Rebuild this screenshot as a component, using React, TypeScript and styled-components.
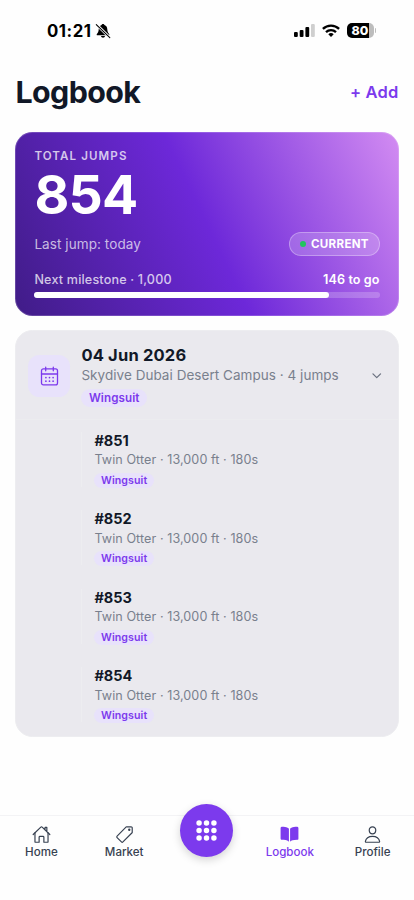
import React from 'react';
import styled, { createGlobalStyle } from 'styled-components';
import {
  IoApps,
  IoBook,
  IoChevronDown,
  IoHomeOutline,
  IoPersonOutline,
  IoPricetagOutline,
} from 'react-icons/io5';

const GlobalStyle = createGlobalStyle`
  * { box-sizing: border-box; }
  body { margin: 0; background: #fff; }
  svg { display: block; flex: none; }
`;

const Screen = styled.div`
  width: 414px;
  height: 900px;
  display: flex;
  flex-direction: column;
  background: #fefefe;
  color: #111827;
  font-family: Inter, sans-serif;
  overflow: hidden;
`;

const StatusBar = styled.div`
  height: 61px;
  padding: 0 38px 0 47px;
  display: flex;
  align-items: center;
  justify-content: space-between;
  color: #000;
`;

const Clock = styled.div`
  display: flex;
  align-items: center;
  gap: 3.5px;
  font-size: 16.8px;
  font-weight: 700;
  line-height: 20px;
  letter-spacing: 0.5px;
`;

const StatusIcons = styled.div`
  display: flex;
  align-items: center;
  gap: 7px;
`;

const Battery = styled.div`
  display: flex;
  align-items: center;
  gap: 1px;
`;

const BatteryBody = styled.div`
  width: 27px;
  height: 14.5px;
  border-radius: 5px;
  background: linear-gradient(90deg, #000 81%, #bdbdbd 81%);
  color: #fff;
  font-size: 12.4px;
  line-height: 15px;
  font-weight: 800;
  text-align: center;
  letter-spacing: 0.1px;
`;

const BatteryTip = styled.div`
  width: 1.5px;
  height: 5px;
  border-radius: 0 2px 2px 0;
  background: #bdbdbd;
`;

const Header = styled.header`
  height: 71px;
  padding: 0 15.5px 9.5px;
  display: flex;
  align-items: center;
  justify-content: space-between;
`;

const Title = styled.h1`
  margin: 0;
  font-size: 30.4px;
  line-height: 38px;
  font-weight: 700;
  letter-spacing: -0.6px;
`;

const AddButton = styled.button`
  padding: 0;
  border: 0;
  background: none;
  color: #7c3aed;
  font: 600 16.5px/20px Inter, sans-serif;
  letter-spacing: 0.2px;
`;

const SummaryCard = styled.section`
  margin: 0 15.4px;
  height: 183.5px;
  padding: 17px 18px 0 18px;
  border: 1px solid rgba(255, 255, 255, 0.18);
  border-radius: 17.5px;
  background: linear-gradient(64.4deg, #401c87 0%, #6d28d9 50%, #d38cf2 100%) border-box;
  color: #fff;
`;

const Eyebrow = styled.div`
  font-size: 11.55px;
  line-height: 12px;
  font-weight: 600;
  letter-spacing: 1.1px;
  color: rgba(255, 255, 255, 0.75);
`;

const Total = styled.div`
  font-size: 53.6px;
  line-height: 65px;
  font-weight: 700;
  letter-spacing: -0.75px;
`;

const SummaryRow = styled.div`
  margin-top: 4.5px;
  height: 24px;
  display: flex;
  align-items: center;
  justify-content: space-between;
`;

const LastJump = styled.div`
  font-size: 13.5px;
  line-height: 18px;
  letter-spacing: 0.08px;
  color: rgba(255, 255, 255, 0.7);
`;

const StatusPill = styled.div`
  height: 24px;
  padding: 0 9.8px;
  display: flex;
  align-items: center;
  gap: 5px;
  border: 1px solid rgba(255, 255, 255, 0.3);
  border-radius: 12px;
  background: rgba(255, 255, 255, 0.18);
  font-size: 11.55px;
  font-weight: 700;
  letter-spacing: 0.3px;
`;

const Dot = styled.i`
  width: 6px;
  height: 6px;
  border-radius: 50%;
  background: #22c55e;
`;

const MilestoneRow = styled.div`
  margin-top: 16px;
  display: flex;
  justify-content: space-between;
  font-size: 12.6px;
  line-height: 16px;
  font-weight: 500;
  letter-spacing: 0.17px;
  color: rgba(255, 255, 255, 0.75);

  strong {
    font-weight: 600;
    letter-spacing: 0.1px;
    color: #fff;
  }
`;

const Track = styled.div`
  margin-top: 4.5px;
  height: 6px;
  border-radius: 3px;
  background: rgba(255, 255, 255, 0.2);
`;

const Fill = styled.div`
  height: 100%;
  border-radius: 3px;
  background: #fff;
`;

const DayCard = styled.section`
  margin: 14.8px 15.4px 0;
  height: 407px;
  border: 1px solid #ededf0;
  border-radius: 17.5px;
  background: #eae9ee;
`;

const DayHeader = styled.div`
  height: 88.5px;
  padding: 11.5px 14.5px 10px 12px;
  display: flex;
  align-items: center;
  border-bottom: 1px solid #ececef;
`;

const IconTile = styled.div`
  width: 41.5px;
  height: 41.5px;
  margin-right: 11.5px;
  display: grid;
  place-items: center;
  border-radius: 11.5px;
  background: #e8e2fb;
  color: #7c3aed;
`;

const DayInfo = styled.div`
  flex: 1;
`;

const DayTitle = styled.div`
  font-size: 16.5px;
  line-height: 21px;
  font-weight: 700;
  letter-spacing: 0.18px;
`;

const DayPlace = styled.div`
  font-size: 13.5px;
  line-height: 17px;
  margin: 1px 0 5px;
  letter-spacing: 0.04px;
  color: #79808d;
`;

const Tag = styled.span<{ $small?: boolean }>`
  display: block;
  width: fit-content;
  padding: 0 ${(p) => (p.$small ? '6.6px' : '7.5px')};
  border-radius: 9px;
  background: #e8e2fb;
  color: #7c3aed;
  font-size: ${(p) => (p.$small ? '10.6px' : '11.6px')};
  line-height: ${(p) => (p.$small ? '15px' : '18px')};
  font-weight: 600;
  letter-spacing: 0.1px;
`;

const JumpList = styled.div`
  padding: 12.2px 14px 0 65px;
  display: flex;
  flex-direction: column;
  gap: 23.4px;
`;

const Jump = styled.div`
  height: 55px;
  padding-left: 12px;
  border-left: 1px solid #ededf0;
`;

const JumpNumber = styled.div`
  font-size: 14.5px;
  line-height: 18px;
  font-weight: 700;
`;

const JumpDetail = styled.div`
  margin: 2.5px 0 4.3px;
  font-size: 12.6px;
  line-height: 16px;
  letter-spacing: 0.07px;
  color: #79808d;
`;

const TabBar = styled.nav`
  margin-top: auto;
  height: 85px;
  padding-top: 9px;
  display: grid;
  grid-template-columns: repeat(5, 1fr);
  border-top: 1px solid #f3f3f5;
`;

const Tab = styled.div<{ $active?: boolean }>`
  display: flex;
  flex-direction: column;
  align-items: center;
  font-size: 11.55px;
  line-height: 16px;
  font-weight: 500;
  color: ${(p) => (p.$active ? '#7c3aed' : '#374151')};
`;

const AppsButton = styled.div`
  width: 53px;
  height: 53px;
  margin: -21px auto 0;
  display: grid;
  place-items: center;
  border-radius: 50%;
  background: #7c3aed;
  color: #fff;
  box-shadow: 0 3px 9px rgba(0, 0, 0, 0.17);
`;

const MutedBell = () => (
  <svg width="16" height="16" viewBox="0 0 16 16">
    <path
      d="M8 1c.8 0 1.3.5 1.5 1.1 1.8.6 2.7 2.2 2.8 4.2.1 2.5.7 3.5 1.8 4.6.5.6.2 1.3-.5 1.3H2.4c-.7 0-1-.7-.5-1.3 1.1-1.1 1.7-2.1 1.8-4.6.1-2 1-3.6 2.8-4.2C6.7 1.5 7.2 1 8 1Z"
      fill="#000"
    />
    <path d="M6 13.1h4c-.2 1-1 1.6-2 1.6s-1.8-.6-2-1.6Z" fill="#000" />
    <path d="M1.7 1.8 15 14.8" stroke="#fff" strokeWidth="2.6" />
    <path d="M1.3 1.6 14.8 14.6" stroke="#000" strokeWidth="1.1" strokeLinecap="round" />
  </svg>
);

const Signal = () => (
  <svg width="21" height="13" viewBox="0 0 21 13">
    <rect x="0" y="8" width="3.8" height="5" rx="1.1" />
    <rect x="5.7" y="6" width="3.8" height="7" rx="1.1" />
    <rect x="11.4" y="3" width="3.8" height="10" rx="1.1" />
    <rect x="17" y="0" width="3.8" height="13" rx="1.1" fill="#cfcfcf" />
  </svg>
);

const Wifi = () => (
  <svg width="18" height="13" viewBox="0 0 18 13" fill="none" stroke="#000" strokeWidth="2.3">
    <path d="M.9 4.9a11.6 11.6 0 0 1 16.2 0" />
    <path d="M4 8.2a7.2 7.2 0 0 1 10 0" />
    <path d="M6.3 10.3a3.9 3.9 0 0 1 5.4 0L9 13Z" fill="#000" stroke="none" />
  </svg>
);

const CalendarIcon = () => (
  <svg width="19" height="20" viewBox="0 0 19 20" fill="none" stroke="currentColor" strokeWidth="1.3" strokeLinecap="round">
    <rect x="1.5" y="2.8" width="16" height="16" rx="1.9" />
    <path d="M1.5 8h16M5.7 1.2v3.6M13.3 1.2v3.6" />
    <g fill="currentColor" stroke="none">
      <circle cx="5.9" cy="11.6" r=".85" />
      <circle cx="9.5" cy="11.6" r=".85" />
      <circle cx="13.1" cy="11.6" r=".85" />
      <circle cx="5.9" cy="15.2" r=".85" />
      <circle cx="9.5" cy="15.2" r=".85" />
      <circle cx="13.1" cy="15.2" r=".85" />
    </g>
  </svg>
);

const TOTAL_JUMPS = 854;
const MILESTONE = 1000;
const jumps = [851, 852, 853, 854];

export default function App() {
  return (
    <Screen>
      <GlobalStyle />
      <StatusBar>
        <Clock>
          01:21
          <MutedBell />
        </Clock>
        <StatusIcons>
          <Signal />
          <Wifi />
          <Battery>
            <BatteryBody>80</BatteryBody>
            <BatteryTip />
          </Battery>
        </StatusIcons>
      </StatusBar>

      <Header>
        <Title>Logbook</Title>
        <AddButton>+ Add</AddButton>
      </Header>

      <SummaryCard>
        <Eyebrow>TOTAL JUMPS</Eyebrow>
        <Total>{TOTAL_JUMPS}</Total>
        <SummaryRow>
          <LastJump>Last jump: today</LastJump>
          <StatusPill>
            <Dot />
            CURRENT
          </StatusPill>
        </SummaryRow>
        <MilestoneRow>
          <span>Next milestone · 1,000</span>
          <strong>{MILESTONE - TOTAL_JUMPS} to go</strong>
        </MilestoneRow>
        <Track>
          <Fill style={{ width: `${(TOTAL_JUMPS / MILESTONE) * 100}%` }} />
        </Track>
      </SummaryCard>

      <DayCard>
        <DayHeader>
          <IconTile>
            <CalendarIcon />
          </IconTile>
          <DayInfo>
            <DayTitle>04 Jun 2026</DayTitle>
            <DayPlace>Skydive Dubai Desert Campus · 4 jumps</DayPlace>
            <Tag>Wingsuit</Tag>
          </DayInfo>
          <IoChevronDown size={13.5} color="#6b7280" />
        </DayHeader>
        <JumpList>
          {jumps.map((n) => (
            <Jump key={n}>
              <JumpNumber>#{n}</JumpNumber>
              <JumpDetail>Twin Otter · 13,000 ft · 180s</JumpDetail>
              <Tag $small>Wingsuit</Tag>
            </Jump>
          ))}
        </JumpList>
      </DayCard>

      <TabBar>
        <Tab>
          <IoHomeOutline size={19} />
          Home
        </Tab>
        <Tab>
          <IoPricetagOutline size={19} />
          Market
        </Tab>
        <AppsButton>
          <IoApps size={25} />
        </AppsButton>
        <Tab $active>
          <IoBook size={19} />
          Logbook
        </Tab>
        <Tab>
          <IoPersonOutline size={19} />
          Profile
        </Tab>
      </TabBar>
    </Screen>
  );
}
